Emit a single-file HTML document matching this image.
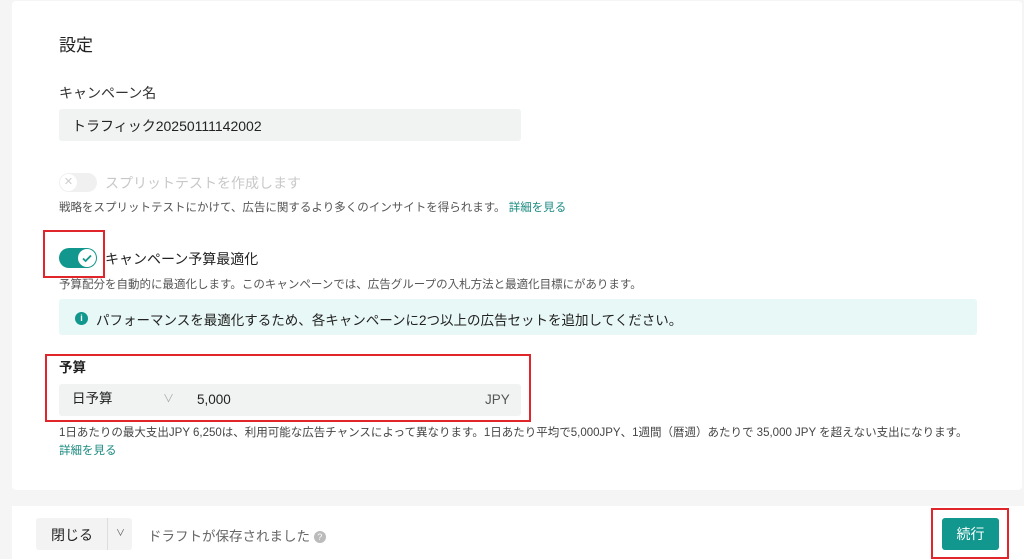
<!DOCTYPE html>
<html><head><meta charset="utf-8"><style>
*{box-sizing:border-box;margin:0;padding:0}
body{width:1024px;height:559px;background:#f5f5f5;font-family:"Liberation Sans","Noto Sans CJK JP",sans-serif;color:#222;position:relative;overflow:hidden}
.card{position:absolute;left:12px;top:1px;width:1010px;height:489px;background:#fff;border-radius:4px}
.a{position:absolute;white-space:nowrap}
.foot{position:absolute;left:12px;top:506px;width:1012px;height:53px;background:#fff}
.red{position:absolute;border:2px solid #e0262b}
</style></head><body>
<div class="card"></div>
<div class="a" style="left:59px;top:31px;font-size:17px;color:#222">設定</div>
<div class="a" style="left:59px;top:83px;font-size:14px;color:#333">キャンペーン名</div>
<div class="a" style="left:59px;top:109px;width:462px;height:32px;background:#f1f2f2;border-radius:3px"></div>
<div class="a" style="left:72px;top:116px;font-size:14px;color:#222">トラフィック20250111142002</div>

<div class="a" style="left:59px;top:173px;width:38px;height:19px;background:#f0f0f0;border-radius:10px"></div>
<div class="a" style="left:60px;top:174px;width:17px;height:17px;background:#fff;border-radius:50%;color:#ccc;font-size:11px;line-height:17px;text-align:center">✕</div>
<div class="a" style="left:105px;top:173px;font-size:14px;color:#c8c8c8">スプリットテストを作成します</div>
<div class="a" style="left:59px;top:199px;font-size:11.5px;color:#555">戦略をスプリットテストにかけて、広告に関するより多くのインサイトを得られます。 <span style="color:#1a8a80">詳細を見る</span></div>

<div class="a" style="left:59px;top:248px;width:38px;height:20px;background:#11978d;border-radius:10px"></div>
<div class="a" style="left:78px;top:249px;width:18px;height:18px;background:#fff;border-radius:50%"><svg width="18" height="18" viewBox="0 0 18 18"><path d="M5 9.5l2.6 2.5L13 6.5" stroke="#11978d" stroke-width="1.8" fill="none"/></svg></div>
<div class="red" style="left:43px;top:230px;width:62px;height:48px"></div>
<div class="a" style="left:105px;top:249px;font-size:14px;color:#222">キャンペーン予算最適化</div>
<div class="a" style="left:59px;top:276px;font-size:11.5px;color:#555">予算配分を自動的に最適化します。このキャンペーンでは、広告グループの入札方法と最適化目標にがあります。</div>

<div class="a" style="left:59px;top:299px;width:918px;height:36px;background:#e8f8f6;border-radius:3px"></div>
<div class="a" style="left:75px;top:312px;width:13px;height:13px;background:#11978d;border-radius:50%;color:#fff;font-size:9px;line-height:13px;text-align:center;font-weight:bold">i</div>
<div class="a" style="left:96px;top:309px;font-size:13.5px;color:#222">パフォーマンスを最適化するため、各キャンペーンに2つ以上の広告セットを追加してください。</div>

<div class="a" style="left:59px;top:356px;font-size:13.5px;color:#222;font-weight:bold">予算</div>
<div class="a" style="left:59px;top:384px;width:462px;height:32px;background:#f1f2f2;border-radius:3px"></div>
<div class="a" style="left:72px;top:389px;font-size:13.5px;color:#222;line-height:20px">日予算</div>
<div class="a" style="left:163px;top:390px;font-size:11px;color:#aaa">∨</div>
<div class="a" style="left:197px;top:392px;font-size:13.5px;color:#222">5,000</div>
<div class="a" style="left:485px;top:392px;font-size:13.5px;color:#555">JPY</div>
<div class="red" style="left:45px;top:354px;width:486px;height:68px"></div>
<div class="a" style="left:59px;top:424px;font-size:11.5px;color:#444">1日あたりの最大支出JPY 6,250は、利用可能な広告チャンスによって異なります。1日あたり平均で5,000JPY、1週間（暦週）あたりで 35,000 JPY を超えない支出になります。</div>
<div class="a" style="left:59px;top:442px;font-size:11.5px;color:#1a8a80">詳細を見る</div>

<div class="foot"></div>
<div class="a" style="left:36px;top:518px;width:96px;height:32px;background:#f3f3f3;border-radius:3px"></div>
<div class="a" style="left:107px;top:518px;width:1px;height:32px;background:#ddd"></div>
<div class="a" style="left:51px;top:525px;font-size:14px;color:#222">閉じる</div>
<div class="a" style="left:116px;top:526px;font-size:9px;color:#555">∨</div>
<div class="a" style="left:148px;top:525px;font-size:13.5px;color:#666">ドラフトが保存されました <span style="display:inline-block;width:12px;height:12px;border-radius:50%;background:#bbb;color:#fff;font-size:9px;line-height:12px;text-align:center;vertical-align:middle">?</span></div>
<div class="a" style="left:942px;top:518px;width:57px;height:32px;background:#11978d;border-radius:3px;color:#fff;font-size:14px;line-height:32px;text-align:center">続行</div>
<div class="red" style="left:931px;top:508px;width:78px;height:51px"></div>
</body></html>
